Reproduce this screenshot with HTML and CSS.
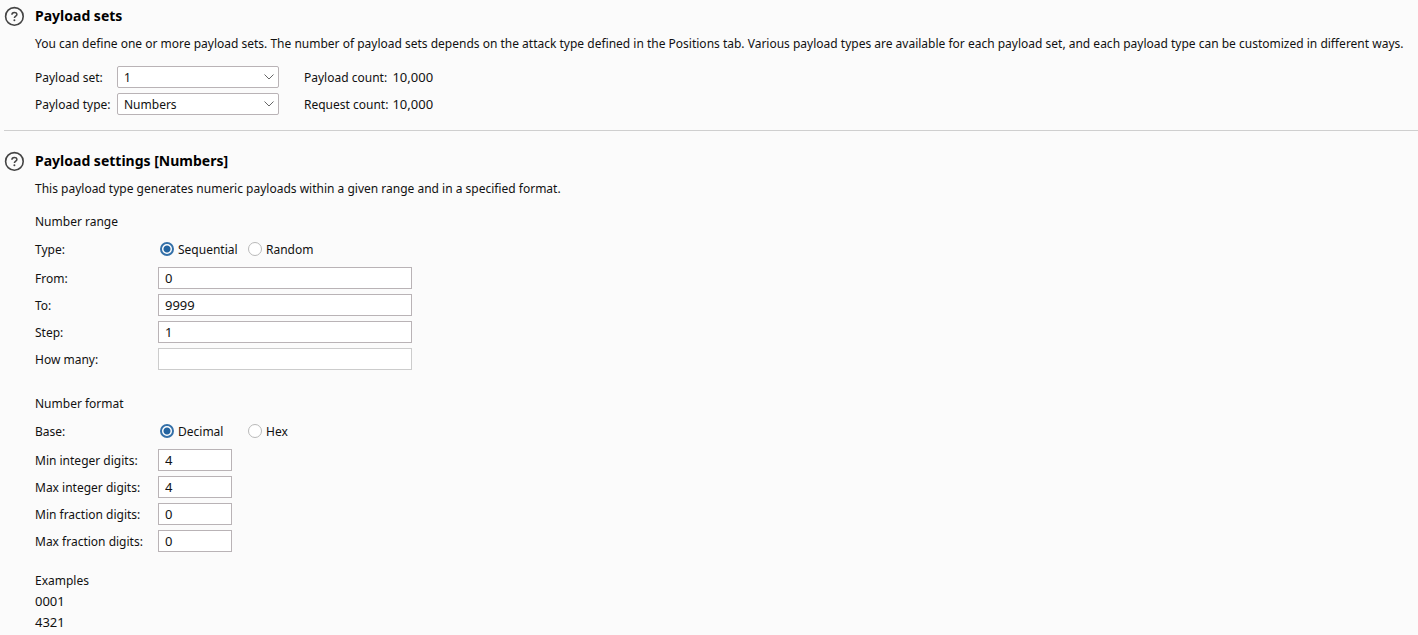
FILE: index.html
```html
<!DOCTYPE html>
<html lang="en">
<head>
<meta charset="utf-8">
<title>Payloads</title>
<link rel="stylesheet" href="styles.css">
</head>
<body>
<main>
  <section class="panel">
    <button class="help" type="button" aria-label="Help">
      <svg viewBox="0 0 20 20" width="20" height="20" fill="none" stroke="currentColor">
        <circle cx="10.4" cy="10.4" r="8.8" stroke-width="1.6"/>
        <path d="M7.9 8.7C7.9 5.6 12.9 5.8 12.9 8.4C12.9 10.1 10.4 10.1 10.4 12" stroke-width="1.5"/>
        <circle cx="10.4" cy="14.3" r="1" fill="currentColor" stroke="none"/>
      </svg>
    </button>
    <div class="content">
      <h2>Payload sets</h2>
      <p class="description">You can define one or more payload sets. The number of payload sets depends on the attack type defined in the Positions tab. Various payload types are available for each payload set, and each payload type can be customized in different ways.</p>
      <div class="sets">
        <label class="caption" for="set">Payload set:</label>
        <div class="select"><select id="set"><option>1</option></select><svg class="chevron" viewBox="0 0 10 6" width="10" height="6"><path d="M.5 .5L5 5L9.500 .5"/></svg></div>
        <span class="caption count">Payload count:</span><span class="number">10,000</span>
        <label class="caption" for="type">Payload type:</label>
        <div class="select"><select id="type"><option>Numbers</option></select><svg class="chevron" viewBox="0 0 10 6" width="10" height="6"><path d="M.5 .5L5 5L9.500 .5"/></svg></div>
        <span class="caption count">Request count:</span><span class="number">10,000</span>
      </div>
    </div>
  </section>
  <hr>
  <section class="panel settings">
    <button class="help" type="button" aria-label="Help">
      <svg viewBox="0 0 20 20" width="20" height="20" fill="none" stroke="currentColor">
        <circle cx="10.4" cy="10.4" r="8.8" stroke-width="1.6"/>
        <path d="M7.9 8.7C7.9 5.6 12.9 5.8 12.9 8.4C12.9 10.1 10.4 10.1 10.4 12" stroke-width="1.5"/>
        <circle cx="10.4" cy="14.3" r="1" fill="currentColor" stroke="none"/>
      </svg>
    </button>
    <div class="content">
      <h2>Payload settings [Numbers]</h2>
      <p class="description">This payload type generates numeric payloads within a given range and in a specified format.</p>
      <div class="group">
        <h3>Number range</h3>
        <div class="row choice" role="radiogroup" aria-labelledby="order">
          <span class="caption" id="order">Type:</span>
          <div class="radios">
            <label><input type="radio" name="order" checked><span class="caption">Sequential</span></label>
            <label><input type="radio" name="order"><span class="caption">Random</span></label>
          </div>
        </div>
        <div class="fields">
          <div class="row"><label class="caption" for="from">From:</label><input class="text" id="from" type="text" value="0"></div>
          <div class="row"><label class="caption" for="to">To:</label><input class="text" id="to" type="text" value="9999"></div>
          <div class="row"><label class="caption" for="step">Step:</label><input class="text" id="step" type="text" value="1"></div>
          <div class="row"><label class="caption" for="many">How many:</label><input class="text" id="many" type="text" disabled></div>
        </div>
      </div>
      <div class="group format">
        <h3>Number format</h3>
        <div class="row choice" role="radiogroup" aria-labelledby="base">
          <span class="caption" id="base">Base:</span>
          <div class="radios">
            <label><input type="radio" name="base" checked><span class="caption">Decimal</span></label>
            <label><input type="radio" name="base"><span class="caption">Hex</span></label>
          </div>
        </div>
        <div class="fields">
          <div class="row"><label class="caption" for="mini">Min integer digits:</label><input class="text short" id="mini" type="text" value="4"></div>
          <div class="row"><label class="caption" for="maxi">Max integer digits:</label><input class="text short" id="maxi" type="text" value="4"></div>
          <div class="row"><label class="caption" for="minf">Min fraction digits:</label><input class="text short" id="minf" type="text" value="0"></div>
          <div class="row"><label class="caption" for="maxf">Max fraction digits:</label><input class="text short" id="maxf" type="text" value="0"></div>
        </div>
      </div>
      <div class="examples">
        <h3 class="caption">Examples</h3>
        <p class="number">0001</p>
        <p class="number">4321</p>
      </div>
    </div>
  </section>
</main>
</body>
</html>
```
FILE: styles.css
```css
* { box-sizing: border-box; }
body {
  margin: 0;
  background: #fbfbfb;
  color: #111;
  font: 12px/20px "Noto Sans", sans-serif;
}
h2, h3, p { margin: 0; }
h2 { font-size: 14px; line-height: 20px; font-weight: 700; color: #000; }
h3 { font-size: 12px; line-height: 20px; font-weight: 400; }
input, select { font: inherit; color: inherit; }
.number, .text { font-size: 13px; }
.caption { padding-top: 2px; line-height: 18px; }
.panel {
  display: grid;
  grid-template-columns: 20px 1fr;
  align-items: start;
  gap: 11px;
  padding: 6px 0 15px 4px;
}
.settings { padding-top: 20px; padding-bottom: 0; }
.help {
  display: flex;
  padding: 0;
  border: 0;
  background: none;
  color: #444;
}
.description { margin-top: 8px; }
.sets {
  display: grid;
  grid-template-columns: 78px 162px auto 1fr;
  align-items: center;
  gap: 5px 4px;
  margin-top: 12px;
}
.count { margin-left: 21px; }
.select { display: grid; align-items: center; }
.select select {
  grid-area: 1 / 1;
  width: 100%;
  height: 22px;
  padding: 1px 6px 0;
  border: 1px solid #b9b3b6;
  border-radius: 2px;
  background: #fff;
  appearance: none;
}
.chevron {
  grid-area: 1 / 1;
  justify-self: end;
  margin-right: 5px;
  fill: none;
  stroke: #666;
  pointer-events: none;
}
hr { margin: 0 0 0 4px; border: 0; border-top: 1px solid #cfcfcf; }
.group { margin-top: 13px; }
.format { margin-top: 24px; }
.row {
  display: grid;
  grid-template-columns: 123px 1fr;
  align-items: center;
}
.choice { margin: 7px 0 8px; }
.radios {
  display: grid;
  grid-template-columns: 88px auto;
  justify-content: start;
  padding-left: 2px;
}
.radios label { display: flex; align-items: center; gap: 4px; }
.radios input {
  width: 14px;
  height: 14px;
  margin: 0;
  border: 1px solid #b9b9b9;
  border-radius: 50%;
  background: #fff;
  appearance: none;
}
.radios input:checked {
  border: 2px solid #3470a8;
  background: radial-gradient(circle, #2464a0 3px, #fff 4px);
}
.fields { display: grid; gap: 5px; }
.text {
  width: 254px;
  max-width: 100%;
  height: 22px;
  padding: 0 6px;
  border: 1px solid #b9b3b6;
  background: #fff;
}
.text:disabled { border-color: #ccc; }
.short { width: 74px; }
.examples { margin-top: 18px; }
.examples p { margin-top: 1px; }
```
